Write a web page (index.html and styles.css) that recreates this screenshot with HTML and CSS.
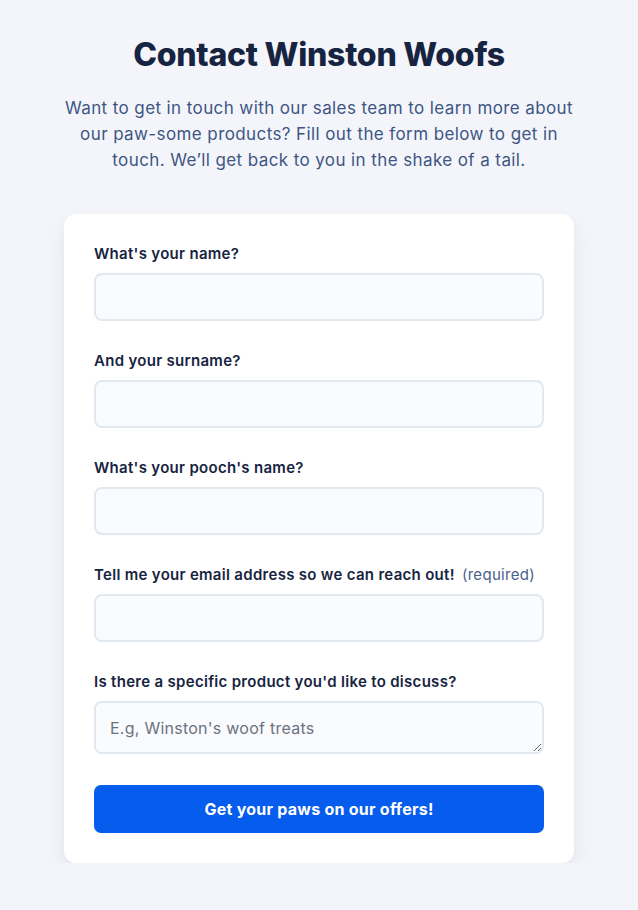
FILE: index.html
```html
<!DOCTYPE html>
<html lang="en">
<head>
<meta charset="utf-8">
<title>Contact Winston Woofs</title>
<link rel="stylesheet" href="styles.css">
</head>
<body>
<main class="page">
  <header class="intro">
    <h1 class="title">Contact Winston Woofs</h1>
    <p class="lead">Want to get in touch with our sales team to learn more about our paw-some products? Fill out the form below to get in touch. We’ll get back to you in the shake of a tail.</p>
  </header>
  <form class="card">
    <div class="field">
      <label class="label" for="name">What's your name?</label>
      <input class="input" id="name" type="text">
    </div>
    <div class="field">
      <label class="label" for="surname">And your surname?</label>
      <input class="input" id="surname" type="text">
    </div>
    <div class="field">
      <label class="label" for="pooch">What's your pooch's name?</label>
      <input class="input" id="pooch" type="text">
    </div>
    <div class="field">
      <label class="label" for="email">Tell me your email address so we can reach out! <span class="req">(required)</span></label>
      <input class="input" id="email" type="email">
    </div>
    <div class="field last">
      <label class="label" for="product">Is there a specific product you'd like to discuss?</label>
      <textarea class="input textarea" id="product" rows="1" placeholder="E.g, Winston's woof treats"></textarea>
    </div>
    <button class="btn" type="button">Get your paws on our offers!</button>
  </form>
</main>
</body>
</html>
```
FILE: styles.css
```css
* { box-sizing: border-box; }
html, body { margin: 0; padding: 0; }
body {
  background: #f3f5fa;
  font-family: Inter, "Noto Sans", sans-serif;
  color: #172441;
  letter-spacing: 0.3px;
}
.page {
  display: flex;
  flex-direction: column;
  align-items: center;
  padding-top: 35px;
}
.intro {
  text-align: center;
  max-width: 514px;
}
.title {
  margin: 0;
  font-size: 32px;
  line-height: 40px;
  font-weight: 800;
  letter-spacing: -0.25px;
  color: #172441;
}
.lead {
  margin: 20px 0 0;
  font-size: 17px;
  line-height: 26px;
  letter-spacing: 0.4px;
  color: #3e5584;
}
.card {
  margin-top: 41px;
  width: 510px;
  background: #fff;
  border-radius: 12px;
  padding: 30px 30px 30px;
  box-shadow: 0 10px 25px rgba(30, 41, 80, 0.06), 0 2px 6px rgba(30, 41, 80, 0.03);
  display: flex;
  flex-direction: column;
}
.field {
  display: flex;
  flex-direction: column;
  margin-bottom: 30px;
}
.label {
  font-size: 15px;
  line-height: 20px;
  font-weight: 600;
  color: #172441;
  margin-bottom: 9px;
}
.req {
  font-weight: 400;
  color: #4a5f8c;
  margin-left: 3px;
}
.input {
  display: block;
  width: 100%;
  height: 48px;
  border: 2px solid #e2e8f0;
  border-radius: 8px;
  background: #fafbfe;
  font-family: inherit;
  font-size: 16px;
  letter-spacing: 0.25px;
  color: #172441;
  padding: 0 14px;
  outline: none;
}
.textarea {
  height: 53px;
  padding: 13px 14px;
  line-height: 24px;
  resize: vertical;
}
.textarea::placeholder { color: #6b7280; }
.field.last { margin-bottom: 31px; }
.btn {
  height: 48px;
  border: 0;
  border-radius: 7px;
  background: #055ced;
  color: #fff;
  font-family: inherit;
  font-size: 16px;
  font-weight: 700;
  letter-spacing: 0.25px;
  cursor: pointer;
}
```
